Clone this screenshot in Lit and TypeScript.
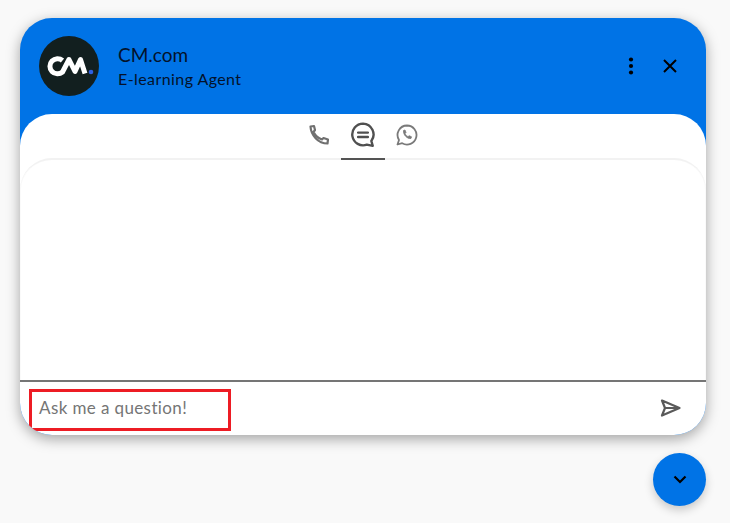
import { LitElement, html, css } from "lit";
import { customElement } from "lit/decorators.js";

@customElement("app-root")
export class AppRoot extends LitElement {
  static styles = css`
    :host {
      display: block;
      width: 730px;
      height: 523px;
      background: #f9f9f9;
      font-family: "Lato", "Noto Sans", sans-serif;
      overflow: hidden;
    }
    .page {
      display: flex;
      flex-direction: column;
      align-items: flex-end;
      padding: 18px 24px 0 20px;
    }
    .card {
      width: 686px;
      height: 417px;
      border-radius: 32px;
      background: #0073e6;
      box-shadow: 0 4px 14px rgba(0, 0, 0, 0.35);
      display: flex;
      flex-direction: column;
      overflow: hidden;
    }
    .head {
      height: 96px;
      flex: none;
      display: flex;
      align-items: flex-start;
      box-sizing: border-box;
      padding: 18px 28px 0 19px;
    }
    .logo {
      width: 60px;
      height: 60px;
      flex: none;
    }
    .names {
      margin-left: 19px;
      padding-top: 7px;
      color: #04122a;
    }
    .name {
      font-size: 19px;
      line-height: 24px;
    }
    .role {
      font-size: 16px;
      line-height: 20px;
      margin-top: 2px;
      letter-spacing: 0.42px;
    }
    .actions {
      margin-left: auto;
      display: flex;
      align-items: center;
      gap: 28px;
      padding-top: 21px;
    }
    .body {
      flex: 1;
      background: #fff;
      border-radius: 32px 32px 0 0;
      display: flex;
      flex-direction: column;
      min-height: 0;
    }
    .tabs {
      height: 46px;
      flex: none;
      display: flex;
      justify-content: center;
      position: relative;
      z-index: 1;
    }
    .tab {
      width: 44px;
      height: 46px;
      box-sizing: border-box;
      display: flex;
      align-items: center;
      justify-content: center;
      padding-bottom: 2px;
      border-bottom: 2px solid transparent;
      color: #707070;
    }
    .tab.on {
      border-bottom-color: #545454;
      color: #505050;
    }
    .messages {
      flex: 1;
      border-top: 2px solid #f2f2f2;
      border-radius: 32px 32px 0 0;
      margin-top: -2px;
      box-shadow: inset 1px 0 0 #fafafa, inset -1px 0 0 #fafafa;
    }
    .compose {
      height: 55px;
      flex: none;
      border-top: 2px solid #757575;
      box-sizing: border-box;
      display: flex;
      align-items: flex-start;
      padding: 7px 25px 0 9px;
    }
    .input {
      width: 202px;
      height: 42px;
      box-sizing: border-box;
      border: 3px solid #ed1c24;
      display: flex;
      align-items: center;
      padding: 0 0 5px 7px;
      font-size: 17px;
      letter-spacing: 0.39px;
      color: #757575;
    }
    .send {
      margin-left: auto;
      margin-top: 10px;
    }
    .fab {
      width: 53px;
      height: 53px;
      margin-top: 18px;
      border-radius: 50%;
      background: #0073e6;
      box-shadow: 0 4px 10px rgba(0, 0, 0, 0.2);
      display: flex;
      align-items: center;
      justify-content: center;
    }
    svg {
      display: block;
    }
  `;

  render() {
    return html`
      <div class="page">
        <div class="card">
          <div class="head">
            <svg class="logo" viewBox="0 0 60 60">
              <circle cx="30" cy="30" r="30" fill="#121f1f"></circle>
              <path
                d="M23.500 24.500a7.600 7.600 0 1 0 0 11.500L30 23.500l6 12 5.500-12 4.500 14"
                fill="none"
                stroke="#fff"
                stroke-width="5"
                stroke-linejoin="round"
              ></path>
              <circle cx="52" cy="36" r="2.300" fill="#2f5fe0"></circle>
            </svg>
            <div class="names">
              <div class="name">CM.com</div>
              <div class="role">E-learning Agent</div>
            </div>
            <div class="actions">
              <svg width="6" height="18" viewBox="0 0 6 18" fill="#000">
                <circle cx="3" cy="2.500" r="2.100"></circle>
                <circle cx="3" cy="9" r="2.100"></circle>
                <circle cx="3" cy="15.500" r="2.100"></circle>
              </svg>
              <svg width="16" height="16" viewBox="0 0 16 16" stroke="#000" stroke-width="2" fill="none">
                <path d="M2 2l12 12M14 2 2 14"></path>
              </svg>
            </div>
          </div>
          <div class="body">
            <div class="tabs">
              <div class="tab">
                <svg width="22" height="22" viewBox="0 0 22 22" fill="none" stroke="currentColor" stroke-width="2.200" stroke-linejoin="round">
                  <path d="M2.500 2.500 6 2l1 4-1.500 2C7 11 10 14 14 15.500l1.500-1.500 4.500 1.500-.5 4C10 19.500 3 11 2.500 2.500z"></path>
                </svg>
              </div>
              <div class="tab on">
                <svg width="26" height="26" viewBox="0 0 24 24" fill="none" stroke="currentColor" stroke-width="2.200" stroke-linecap="round">
                  <path d="M12 1.500a10 10 0 1 0 3.500 19.400L21 22l-1.300-4.500A10 10 0 0 0 12 1.500z" stroke-linejoin="round"></path>
                  <path d="M7.500 9.800h9M7.500 13.800h9"></path>
                </svg>
              </div>
              <div class="tab">
                <svg width="22" height="22" viewBox="0 0 22 22" fill="none" stroke="#7a7a7a" stroke-width="1.800" stroke-linejoin="round">
                  <path d="M11 1.500a9.500 9.500 0 0 0-8 14.500L1.500 20.500l4.700-1.300A9.500 9.500 0 1 0 11 1.500z"></path>
                  <path d="M7.500 6.500 9 6l1 2.500-1 1.200c.6 1.300 1.700 2.400 3 3l1.200-1 2.300 1.100-.5 1.700c-3.500.7-8-3.500-7.500-8z" fill="#7a7a7a" stroke-width="0.800"></path>
                </svg>
              </div>
            </div>
            <div class="messages"></div>
            <div class="compose">
              <div class="input">Ask me a question!</div>
              <svg class="send" width="21" height="18" viewBox="0 0 21 18" fill="none" stroke="#5a5a5a" stroke-width="2.200" stroke-linejoin="round" stroke-linecap="round">
                <path d="M2 1.500 19.500 9 2 16.500 5 9z M5 9h14"></path>
              </svg>
            </div>
          </div>
        </div>
        <div class="fab">
          <svg width="14" height="9" viewBox="0 0 14 9" fill="none" stroke="#000" stroke-width="2.200">
            <path d="M1.500 1.500 7 7l5.500-5.500"></path>
          </svg>
        </div>
      </div>
    `;
  }
}
